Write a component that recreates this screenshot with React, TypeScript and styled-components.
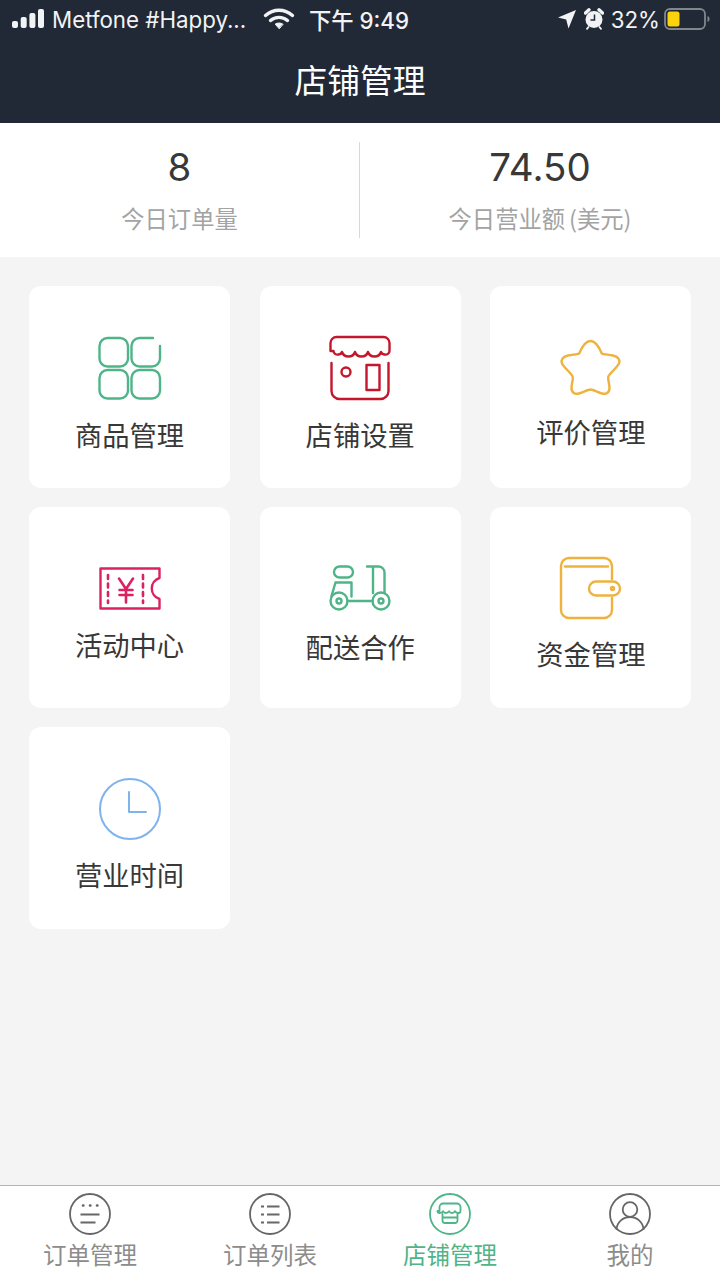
import styled, { createGlobalStyle } from "styled-components";

const cjk = `"Noto Sans CJK SC", "Liberation Sans", sans-serif`;
const latin = `Inter, "Noto Sans CJK SC", sans-serif`;

const GREEN = "#4fb488";
const GRAY = "#666";

const GlobalStyle = createGlobalStyle`
  html, body {
    margin: 0;
    padding: 0;
    background: #f4f4f4;
  }
  * {
    box-sizing: border-box;
  }
`;

const Page = styled.div`
  width: 720px;
  height: 1280px;
  display: flex;
  flex-direction: column;
  background: #f4f4f4;
  overflow: hidden;
  font-family: ${cjk};
`;

const Header = styled.header`
  height: 123px;
  background: #222936;
  color: #fff;
  display: flex;
  flex-direction: column;
`;

const StatusBar = styled.div`
  height: 40px;
  padding: 0 10px 2px 12px;
  display: flex;
  align-items: center;
  font-family: ${latin};
  font-size: 22.3px;
  color: #f2f3f4;
`;

const Carrier = styled.span`
  margin-left: 8px;
  width: 212px;
  white-space: nowrap;
`;

const Clock = styled.span`
  margin-left: 15px;
  font-weight: 500;
  white-space: nowrap;
`;

const StatusRight = styled.div`
  margin-left: auto;
  display: flex;
  align-items: center;
  gap: 8px;
`;

const Percent = styled.span`
  margin-left: -1px;
  margin-right: -4px;
`;

const Title = styled.h1`
  margin: 0;
  flex: 1;
  display: flex;
  align-items: center;
  justify-content: center;
  font-size: 32.8px;
  font-weight: 400;
  padding-bottom: 7px;
`;

const Stats = styled.section`
  height: 134px;
  background: #fff;
  display: grid;
  grid-template-columns: 1fr 1fr;
  align-items: center;
`;

const Stat = styled.div<{ $divider?: boolean }>`
  height: 96px;
  display: flex;
  flex-direction: column;
  align-items: center;
  ${(p) => (p.$divider ? "border-right: 1px solid #d8d8d8;" : "")}
`;

const StatValue = styled.div`
  font-family: ${latin};
  font-size: 38.5px;
  line-height: 50px;
  color: #383838;
`;

const StatLabel = styled.div`
  margin-top: 8px;
  font-size: 23.3px;
  line-height: 36px;
  color: #a3a3a3;
`;

const Paren = styled.span`
  margin-left: 4px;
`;

const Grid = styled.main`
  flex: 1;
  padding: 29px 29px 0;
  display: grid;
  grid-template-columns: repeat(3, 201px);
  grid-auto-rows: 201.6px;
  column-gap: 29.7px;
  row-gap: 19px;
  align-content: start;
`;

const Card = styled.div`
  background: #fff;
  border-radius: 12px;
  padding-top: 11px;
  display: flex;
  flex-direction: column;
  align-items: center;
  justify-content: center;
  gap: 19px;
`;

const CardLabel = styled.div`
  font-size: 27.3px;
  line-height: 30px;
  color: #383838;
`;

const TabBar = styled.nav`
  height: 95px;
  background: #fff;
  border-top: 1px solid #b4b4b4;
  display: grid;
  grid-template-columns: repeat(4, 1fr);
`;

const Tab = styled.div<{ $active?: boolean }>`
  display: flex;
  flex-direction: column;
  align-items: center;
  padding-top: 7px;
  gap: 3px;
  font-size: 23.5px;
  line-height: 32px;
  color: ${(p) => (p.$active ? GREEN : "#8c8c8c")};
`;

const Line = styled.svg.attrs({ fill: "none", strokeLinecap: "round", strokeLinejoin: "round" })`
  display: block;
  overflow: visible;
`;

const Signal = () => (
  <svg width="32" height="20" viewBox="0 0 32 20" fill="#f2f3f4">
    <rect x="0" y="12" width="6" height="7" rx="2" />
    <rect x="8.700" y="8" width="6" height="11" rx="2" />
    <rect x="17.400" y="4" width="6" height="15" rx="2" />
    <rect x="26" y="0" width="6" height="19" rx="2" />
  </svg>
);

const Wifi = () => (
  <Line width="30" height="22" viewBox="0 0 30 22" stroke="#f2f3f4" strokeWidth="3.400" strokeLinecap="butt">
    <path d="M1.500 7.500C9.500 .5 20.500 .5 28.500 7.500" />
    <path d="M6.500 12.500c4.800-4.200 12.200-4.200 17 0" />
    <path d="M15 20.500l-3.800-4.400c2.200-1.500 5.400-1.500 7.600 0z" fill="#f2f3f4" strokeWidth="1" strokeLinejoin="round" />
  </Line>
);

const Arrow = () => (
  <svg width="18" height="20" viewBox="0 0 18 20" fill="#f2f3f4">
    <path d="M18 1 10.500 19.500l-2.300-9L0 8.500z" />
  </svg>
);

const Alarm = () => (
  <svg width="20" height="22" viewBox="0 0 20 22">
    <circle cx="10" cy="11.500" r="8.500" fill="#f2f3f4" />
    <path d="M1.500 5 5 1.800M18.500 5 15 1.800" stroke="#f2f3f4" strokeWidth="3.400" strokeLinecap="round" />
    <path d="M4.500 19 3 20.800M15.500 19l1.500 1.800" stroke="#f2f3f4" strokeWidth="1.800" strokeLinecap="round" />
    <path d="M10.500 6.500v5.500H6.500" fill="none" stroke="#222936" strokeWidth="1.500" />
  </svg>
);

const Battery = () => (
  <svg width="46" height="24" viewBox="0 0 46 24">
    <rect x="1" y="2" width="40" height="20" rx="5" fill="none" stroke="#82868d" strokeWidth="1.800" />
    <rect x="3.500" y="4.500" width="12" height="15" rx="2.500" fill="#fcd20c" />
    <path d="M43.500 9c1.300.4 2 1.500 2 3s-.7 2.600-2 3z" fill="#82868d" />
  </svg>
);

const ProductIcon = () => (
  <Line width="64" height="64" viewBox="0 0 64 64" stroke={GREEN} strokeWidth="2.400">
    <rect x="1.500" y="2" width="28.500" height="28.500" rx="8" />
    <path d="M55 2H41.500a8 8 0 0 0-8 8v12.500a8 8 0 0 0 8 8H54a8 8 0 0 0 8-8V10" />
    <rect x="1.500" y="34" width="28.500" height="28.500" rx="8" />
    <rect x="33.500" y="34" width="28.500" height="28.500" rx="8" />
  </Line>
);

const ShopIcon = () => (
  <Line width="62" height="64" viewBox="0 0 62 64" stroke="#c3172c" strokeWidth="2.400">
    <path d="M1.500 15V7a6 6 0 0 1 6-6h47a6 6 0 0 1 6 6v8c0 2.500-2.500 4-5 3.500-2-.4-3-1.300-3.500-2.500-1 3-3.700 4.500-6.500 4.500s-5.500-1.500-6.500-4.500c-1 3-3.200 4.500-6.500 4.500s-5.500-1.500-6.500-4.500c-1 3-3.700 4.500-6.500 4.500s-5.500-1.500-6.500-4.500c-.5 1.200-1.500 2.100-3.500 2.500-2.500.5-5-1-5-3.500z" />
    <path d="M2.500 27v28a8 8 0 0 0 8 8h41a8 8 0 0 0 8-8V27" />
    <circle cx="17" cy="36" r="4.500" />
    <rect x="37.500" y="29" width="13" height="25" />
  </Line>
);

const StarIcon = () => (
  <Line width="60" height="58" viewBox="0 0 60 58" stroke="#efb23e" strokeWidth="2.400">
    <path d="M18.300 14.300C20.500 9 24 2 29.500 2S38.500 9 40.700 14.300C42 15.500 48 15.500 52 16.500C57 17.500 59.500 21 58 24.500C56 28.500 50 33 47.300 37.500C46.500 40 48.500 44 48.500 49C48.500 54 45 55.500 41 54.500C37 53.500 32 50.500 29.500 50.500C27 50.500 22 53.500 18 54.500C14 55.500 10.500 54 10.500 49C10.500 44 12.500 40 11.700 37.500C9 33 3 28.500 1 24.500C-.5 21 2 17.500 7 16.500C11 15.500 17 15.500 18.300 14.300Z" />
  </Line>
);

const TicketIcon = () => (
  <Line width="62" height="43" viewBox="0 0 62 43" stroke="#da2263" strokeWidth="2.400" strokeLinecap="butt" strokeLinejoin="miter">
    <path d="M1.500 1.500h59V11a11 11 0 0 0 0 21v9.500h-59z" />
    <path d="M9 8v28M44 8v28" strokeDasharray="4 4.500" strokeWidth="2.600" />
    <path d="M20 11.500 27 22l7-10.500M27 22v13.500M20.500 23h13M20.500 28h13" strokeWidth="2.600" />
  </Line>
);

const ScooterIcon = () => (
  <Line width="62" height="47" viewBox="0 0 62 47" stroke={GREEN} strokeWidth="2.400">
    <rect x="5" y="1.500" width="19" height="11" rx="5.500" />
    <path d="M6.500 17.500h16v14M6.500 17.500 2.500 31" />
    <circle cx="10" cy="36" r="8.500" />
    <circle cx="10" cy="36" r="2.500" />
    <circle cx="52" cy="36" r="8.500" />
    <circle cx="52" cy="36" r="2.500" />
    <path d="M18.500 36h25M38 1.500h11.500a6 6 0 0 1 6 6V28M44 1.500V28" />
  </Line>
);

const WalletIcon = () => (
  <Line width="62" height="62" viewBox="0 0 62 62" stroke="#efb23e" strokeWidth="2.400">
    <path d="M52 22V9a8 8 0 0 0-8-8H9a8 8 0 0 0-8 8v44a8 8 0 0 0 8 8h35a8 8 0 0 0 8-8V41" />
    <path d="M5 9.500h43" />
    <rect x="29" y="24.500" width="31" height="14" rx="7" />
    <circle cx="52.500" cy="31.500" r="1.500" />
  </Line>
);

const ClockIcon = () => (
  <Line width="62" height="62" viewBox="0 0 62 62" stroke="#7fb3ee" strokeWidth="2" strokeLinecap="butt">
    <circle cx="31" cy="31" r="30" />
    <path d="M30 14v20h17" />
  </Line>
);

const TabCircle = ({ color, children }: { color: string; children: React.ReactNode }) => (
  <Line width="42" height="42" viewBox="0 0 42 42" stroke={color} strokeWidth="1.800">
    <circle cx="21" cy="21" r="20" />
    {children}
  </Line>
);

const OrdersTab = () => (
  <TabCircle color={GRAY}>
    <path d="M14 12.500h.4M21 12.500h.4M28 12.500h.4" strokeWidth="2.600" />
    <path d="M11.500 21.500h19M11.500 29.500h15" strokeLinecap="butt" />
  </TabCircle>
);

const ListTab = () => (
  <TabCircle color={GRAY}>
    <path d="M12 13.500h3M12 21.500h3M12 29.500h3" strokeLinecap="butt" />
    <path d="M18 13.500h12.500M18 21.500h12.500M18 29.500h12.500" strokeLinecap="butt" />
  </TabCircle>
);

const StoreTab = () => (
  <TabCircle color={GREEN}>
    <path d="M10.500 18v-4a3.500 3.500 0 0 1 3.500-3.500h14a3.500 3.500 0 0 1 3.500 3.500v4c0 1.300-1 2-2.200 2-1.600 0-2.800-.6-3.300-1.800-.6 1.200-1.900 1.800-3 1.800s-2.400-.6-3-1.800c-.6 1.200-1.900 1.800-3 1.800s-2.400-.6-3-1.800c-.5 1.200-1.700 1.800-3.300 1.800-1.200 0-2.200-.7-2.200-2z" />
    <path d="M13.500 21v6.500a2.500 2.500 0 0 0 2.500 2.500h10a2.500 2.500 0 0 0 2.500-2.500V21M14 24.500h14" />
  </TabCircle>
);

const MineTab = () => (
  <TabCircle color={GRAY}>
    <circle cx="21" cy="16.500" r="7.300" />
    <path d="M7.500 36c.8-7 6.500-12 13.500-12s12.700 5 13.500 12" />
  </TabCircle>
);

const cards = [
  { label: "商品管理", icon: <ProductIcon /> },
  { label: "店铺设置", icon: <ShopIcon /> },
  { label: "评价管理", icon: <StarIcon /> },
  { label: "活动中心", icon: <TicketIcon /> },
  { label: "配送合作", icon: <ScooterIcon /> },
  { label: "资金管理", icon: <WalletIcon /> },
  { label: "营业时间", icon: <ClockIcon /> },
];

const tabs = [
  { label: "订单管理", icon: <OrdersTab /> },
  { label: "订单列表", icon: <ListTab /> },
  { label: "店铺管理", icon: <StoreTab />, active: true },
  { label: "我的", icon: <MineTab /> },
];

export default function App() {
  return (
    <Page>
      <GlobalStyle />
      <Header>
        <StatusBar>
          <Signal />
          <Carrier>Metfone #Happy...</Carrier>
          <Wifi />
          <Clock>下午 9:49</Clock>
          <StatusRight>
            <Arrow />
            <Alarm />
            <Percent>32%</Percent>
            <Battery />
          </StatusRight>
        </StatusBar>
        <Title>店铺管理</Title>
      </Header>
      <Stats>
        <Stat $divider>
          <StatValue>8</StatValue>
          <StatLabel>今日订单量</StatLabel>
        </Stat>
        <Stat>
          <StatValue>74.50</StatValue>
          <StatLabel>
            今日营业额<Paren>(美元)</Paren>
          </StatLabel>
        </Stat>
      </Stats>
      <Grid>
        {cards.map((c) => (
          <Card key={c.label}>
            {c.icon}
            <CardLabel>{c.label}</CardLabel>
          </Card>
        ))}
      </Grid>
      <TabBar>
        {tabs.map((t) => (
          <Tab key={t.label} $active={t.active}>
            {t.icon}
            <span>{t.label}</span>
          </Tab>
        ))}
      </TabBar>
    </Page>
  );
}
